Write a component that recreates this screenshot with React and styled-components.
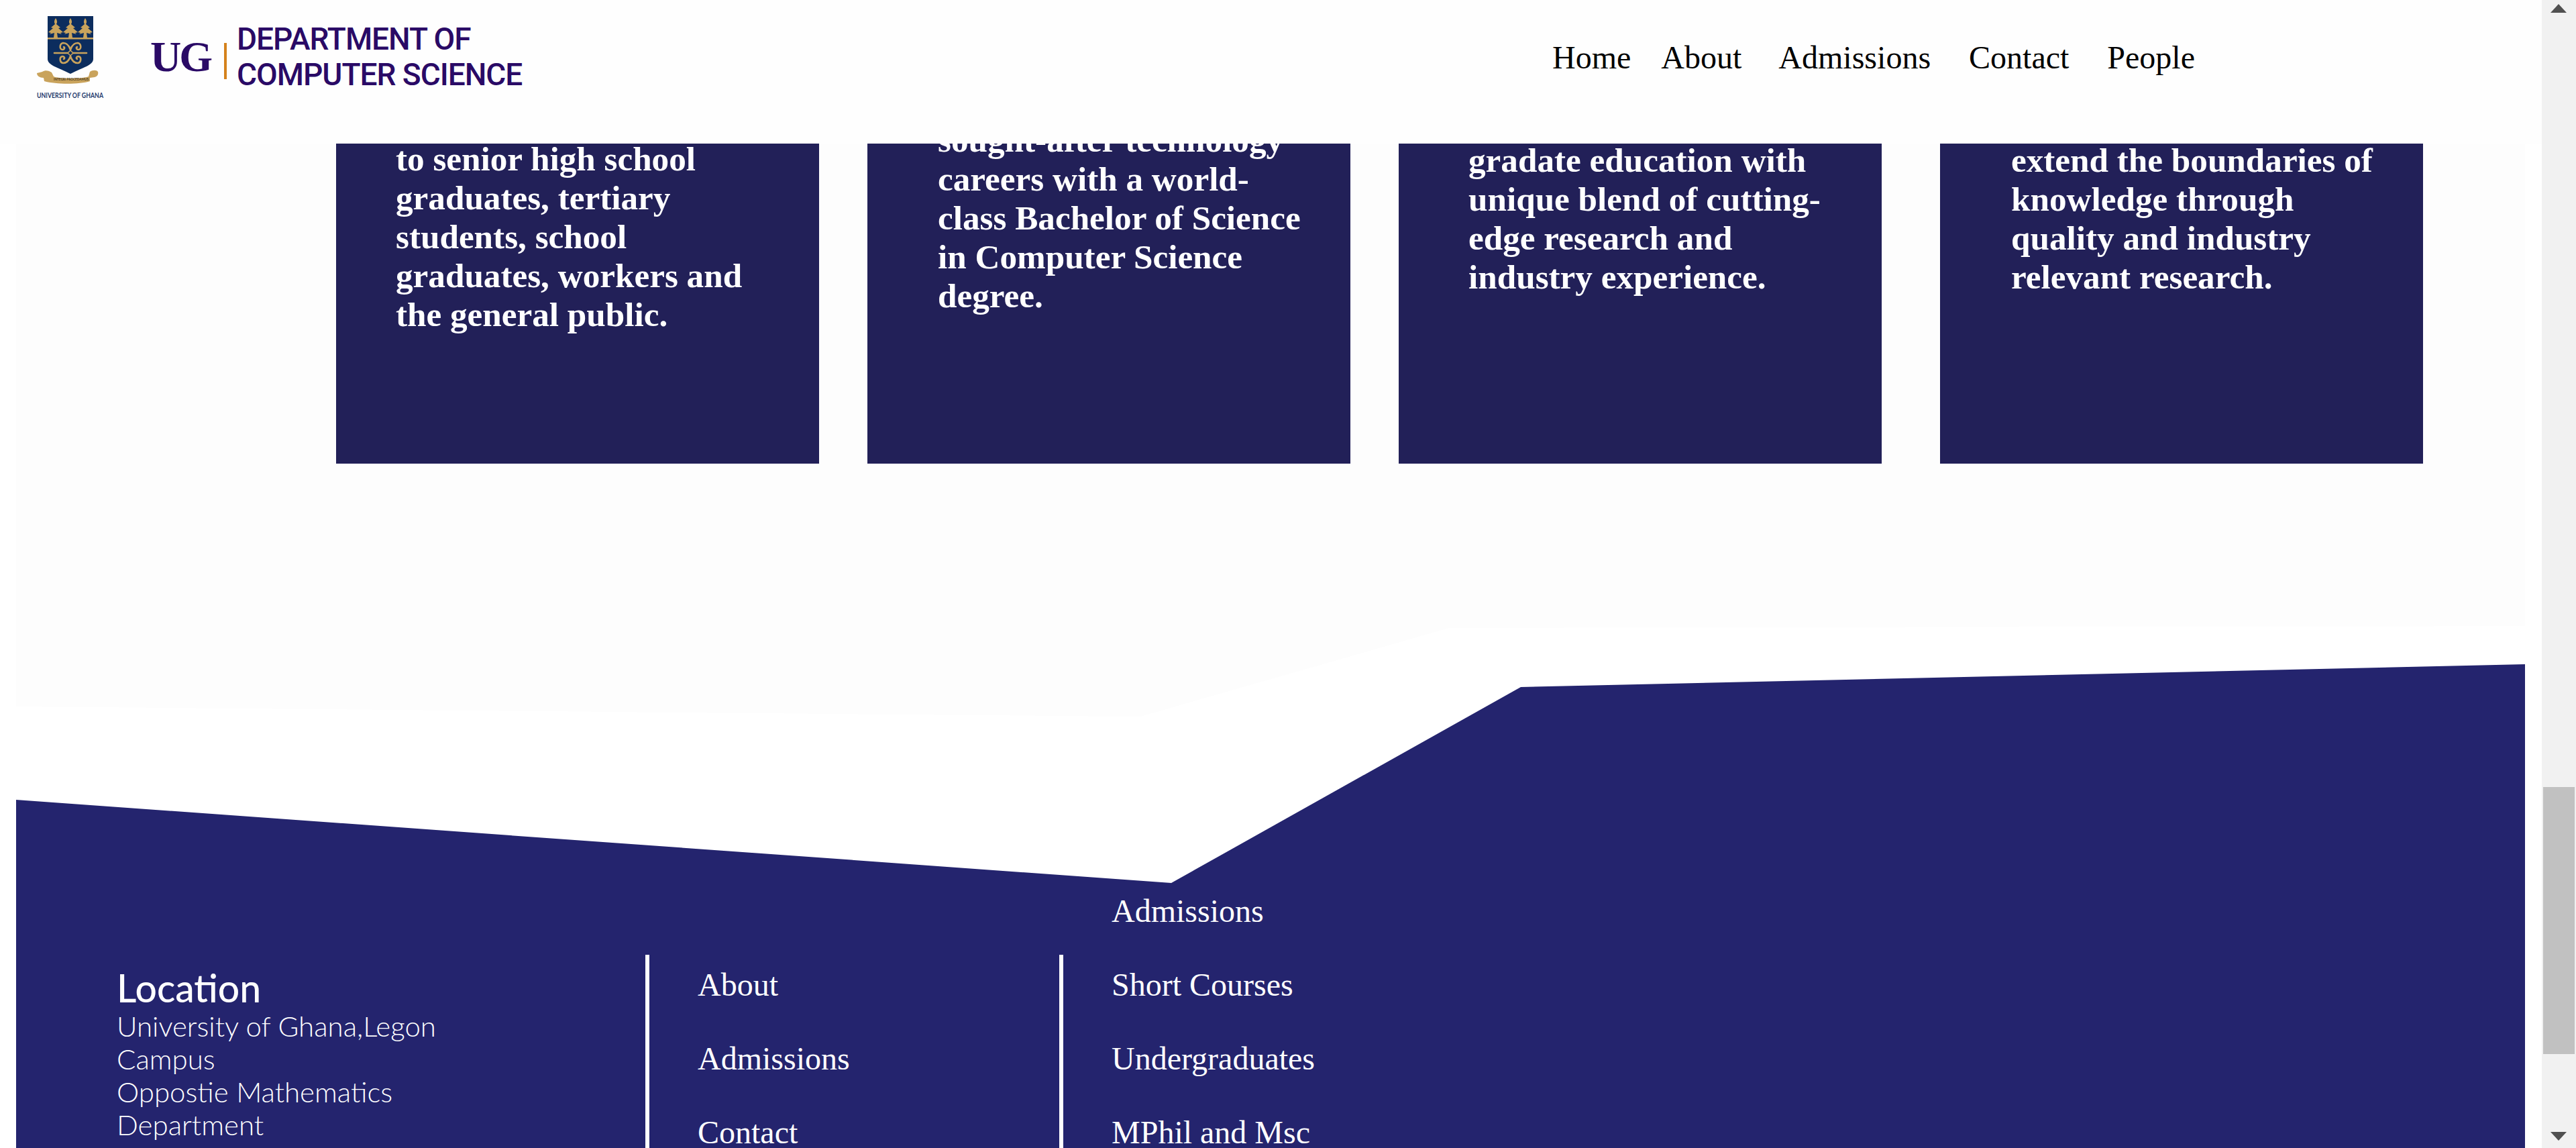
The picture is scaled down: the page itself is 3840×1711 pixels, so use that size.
import React from "react";
import styled, { createGlobalStyle } from "styled-components";

const GlobalStyle = createGlobalStyle`
  html, body {
    margin: 0;
    padding: 0;
    height: 100%;
    overflow: hidden;
    background: #ffffff;
  }
`;

// css page
const Screen = styled.div`
  height: 100vh;
  display: flex;
  overflow: hidden;
  font-family: "Liberation Serif", serif;
`;

const Page = styled.div`
  flex: 1;
  min-width: 0;
  display: flex;
  flex-direction: column;
  background: #ffffff;
`;

// css header
const Header = styled.header`
  height: 214px;
  flex-shrink: 0;
  padding: 0 517px 0 40px;
  background: #fefefe;
  display: flex;
  align-items: flex-start;
  justify-content: space-between;
`;

const Brand = styled.div`
  height: 170px;
  display: flex;
  align-items: center;
`;

const Crest = styled.svg`
  width: 170px;
  height: 170px;
`;

const Initials = styled.span`
  margin-left: 14px;
  font-size: 64px;
  font-weight: 700;
  letter-spacing: -3px;
  color: #2a0a66;
`;

const BrandBar = styled.span`
  width: 4px;
  height: 54px;
  margin: 12px 15px 0 20px;
  background: #d5821c;
`;

const BrandTitle = styled.div`
  font-family: Roboto, sans-serif;
  font-weight: 500;
  font-size: 46px;
  line-height: 53px;
  letter-spacing: -1px;
  color: #2a0a66;
`;

const Nav = styled.nav`
  height: 170px;
  display: flex;
  align-items: center;
`;

const NavLink = styled.a`
  margin-right: ${(props) => props.$space}px;
  font-size: 48px;
  color: #000000;
`;

// css cards
const Band = styled.section`
  height: 854px;
  margin: 0 25px 0 24px;
  flex-shrink: 0;
  padding-left: 477px;
  background: #fdfdfd;
  display: flex;
  clip-path: polygon(0 0, 100% 0, 100% 719px, 2136px 722px, 1676px 854px, 0 839px);
`;

const Card = styled.article`
  width: 720px;
  height: 477px;
  margin-left: ${(props) => props.$left}px;
  padding-left: ${(props) => props.$inset}px;
  box-sizing: border-box;
  overflow: hidden;
  background: #222058;
`;

const CardText = styled.p`
  margin: ${(props) => props.$top}px 0 0;
  max-width: 550px;
  font-size: 51.2px;
  font-weight: 700;
  line-height: 58px;
  color: #ffffff;
`;

// css footer
const Footer = styled.footer`
  height: 721px;
  margin: -78px 25px 0 24px;
  flex-shrink: 0;
  padding: 433px 0 0 150px;
  box-sizing: border-box;
  background: #24246e;
  display: flex;
  color: #ffffff;
  clip-path: polygon(0 202px, 1722px 326px, 2243px 34px, 100% 0, 100% 100%, 0 100%);
`;

const Location = styled.div`
  width: 788px;
  padding-top: 17px;
  flex-shrink: 0;
  font-family: Lato, sans-serif;
`;

const LocationTitle = styled.h3`
  margin: 0;
  font-size: 57px;
  font-weight: 500;
  line-height: 65px;
`;

const LocationText = styled.p`
  margin: 0;
  font-size: 42px;
  font-weight: 300;
  line-height: 49px;
`;

const RuleColumn = styled.div`
  width: ${(props) => props.$width}px;
  padding-left: 72px;
  flex-shrink: 0;
  box-sizing: border-box;
  border-left: 6px solid #ffffff;
`;

const LinkList = styled.ul`
  margin: ${(props) => props.$top}px 0 0;
  padding: 0;
  list-style: none;
`;

const LinkItem = styled.li`
  margin-bottom: 55px;
  font-size: 48px;
  line-height: 55px;
`;

// css scrollbar
const Scrollbar = styled.aside`
  width: 51px;
  flex-shrink: 0;
  position: relative;
  background: #f1f1f1;
`;

const ScrollThumb = styled.div`
  position: absolute;
  top: 1173px;
  left: 2px;
  width: 47px;
  height: 398px;
  background: #c1c1c1;
`;

const ScrollArrow = styled.div`
  position: absolute;
  left: 13px;
  width: 0;
  height: 0;
  border-left: 12.5px solid transparent;
  border-right: 12.5px solid transparent;
  ${(props) =>
    props.$down
      ? "bottom: 11px; border-top: 13px solid #505050;"
      : "top: 6px; border-bottom: 13px solid #505050;"}
`;

const navLinks = [
  { label: "Home", space: 45 },
  { label: "About", space: 55 },
  { label: "Admissions", space: 57 },
  { label: "Contact", space: 57 },
  { label: "People", space: 0 },
];

const cards = [
  {
    left: 0,
    inset: 89,
    top: -6,
    text: "to senior high school graduates, tertiary students, school graduates, workers and the general public.",
  },
  {
    left: 72,
    inset: 105,
    top: -34,
    text: "sought-after technology careers with a world-class Bachelor of Science in Computer Science degree.",
  },
  {
    left: 72,
    inset: 104,
    top: -4,
    text: "gradate education with unique blend of cutting-edge research and industry experience.",
  },
  {
    left: 87,
    inset: 106,
    top: -4,
    text: "extend the boundaries of knowledge through quality and industry relevant research.",
  },
];

const gold = "#c9a35c";

const treePath = (x) =>
  `M${x} 27c2 3 3 6 1 9l6 5-3 1 7 6-4 1 2 2-7-2 1 7h-6l1-7-7 2 2-2-4-1 7-6-3-1 6-5c-2-3-1-6 1-9Z`;

const UgCrest = () => (
  <Crest viewBox="40 0 170 170" role="img" aria-label="University of Ghana crest">
    <path d="M71 24H139V88C139 97 125 100 105 110C85 100 71 97 71 88Z" fill="#0c2d5e" />
    <rect x="71" y="56" width="68" height="2.5" fill={gold} />
    {[83, 105, 127].map((x) => (
      <path key={x} d={treePath(x)} fill={gold} />
    ))}
    <g fill="none" stroke={gold} strokeWidth="2.6" strokeLinecap="round">
      <path d="M81 79H129" />
      <path d="M105 74c-2-6-6-10-11-10c-5 1-6 9-1 10c3 0 4-3 2-4" />
      <path d="M105 74c2-6 6-10 11-10c5 1 6 9 1 10c-3 0-4-3-2-4" />
      <path d="M105 84c-2 6-6 10-11 10c-5-1-6-9-1-10c3 0 4 3 2 4" />
      <path d="M105 84c2 6 6 10 11 10c5-1 6-9 1-10c-3 0-4 3-2 4" />
    </g>
    <path d="M105 75l4 4-4 4-4-4Z" fill="#0c2d5e" stroke={gold} strokeWidth="1.5" />
    <path d="M63 107c4-3 10-2 14 1l3 6c8 4 42 4 52 0l2-7c4-3 10-3 12 0c1 4-1 7-5 8l-7 1v5c-16 5-50 5-68 0l-1-5c-6 0-10-3-10-7Z" fill={gold} />
    <text x="80" y="120" textLength="52" lengthAdjust="spacingAndGlyphs" fontFamily="Lato, sans-serif" fontSize="6" fontWeight="700" fill="#4a3a20">INTEGRI PROCEDAMUS</text>
    <text x="55" y="146" textLength="99" lengthAdjust="spacingAndGlyphs" fontFamily="Lato, sans-serif" fontSize="11" fontWeight="700" fill="#1f3a6d">UNIVERSITY OF GHANA</text>
  </Crest>
);

export default function App() {
  return (
    <Screen>
      <GlobalStyle />
      <Page>
        <Header>
          <Brand>
            <UgCrest />
            <Initials>UG</Initials>
            <BrandBar />
            <BrandTitle>
              DEPARTMENT OF
              <br />
              COMPUTER SCIENCE
            </BrandTitle>
          </Brand>
          <Nav>
            {navLinks.map((link) => (
              <NavLink key={link.label} $space={link.space}>
                {link.label}
              </NavLink>
            ))}
          </Nav>
        </Header>

        <Band>
          {cards.map((card) => (
            <Card key={card.inset} $left={card.left} $inset={card.inset}>
              <CardText $top={card.top}>{card.text}</CardText>
            </Card>
          ))}
        </Band>

        <Footer>
          <Location>
            <LocationTitle>Location</LocationTitle>
            <LocationText>
              University of Ghana,Legon
              <br />
              Campus
              <br />
              Oppostie Mathematics
              <br />
              Department
            </LocationText>
          </Location>
          <RuleColumn $width={617}>
            <LinkList $top={17}>
              <LinkItem>About</LinkItem>
              <LinkItem>Admissions</LinkItem>
              <LinkItem>Contact</LinkItem>
            </LinkList>
          </RuleColumn>
          <RuleColumn $width={700}>
            <LinkList $top={-93}>
              <LinkItem>Admissions</LinkItem>
              <LinkItem>Short Courses</LinkItem>
              <LinkItem>Undergraduates</LinkItem>
              <LinkItem>MPhil and Msc</LinkItem>
            </LinkList>
          </RuleColumn>
        </Footer>
      </Page>
      <Scrollbar>
        <ScrollArrow />
        <ScrollThumb />
        <ScrollArrow $down />
      </Scrollbar>
    </Screen>
  );
}
